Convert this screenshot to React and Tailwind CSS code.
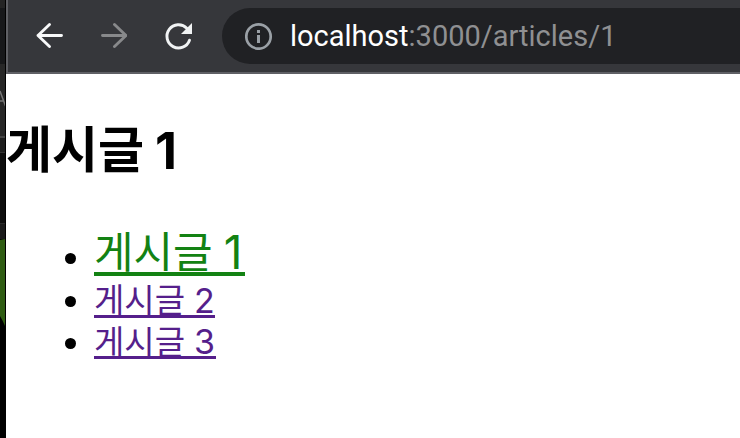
import React from "react";

function BackgroundWindow() {
  return (
    <div className="flex h-full w-[6px] shrink-0 flex-col overflow-hidden border-r border-black bg-black font-['Inter',sans-serif]">
      <div className="h-2 shrink-0 bg-[#242424]" />
      <div className="h-14 shrink-0 bg-[#17181a]" />
      <div className="h-[72px] shrink-0 overflow-hidden bg-[#272727]">
        <svg className="block h-full w-[5px]" viewBox="0 0 5 72" fill="none" stroke="#777" strokeWidth="1.5">
          <path d="M0 27 L5.5 42 M0 37H4" />
        </svg>
      </div>
      <div className="h-[2px] shrink-0 bg-[#444]" />
      <div className="h-[14px] shrink-0 bg-[#1d1d1d]" />
      <div className="h-px shrink-0 bg-[#333]" />
      <div className="h-[70px] shrink-0 bg-[#0d0d0d]" />
      <div className="h-4 shrink-0 border-t border-[#2a2a2a] bg-[#1a1a1a]" />
      <svg className="block h-[87px] w-[5px] shrink-0" viewBox="0 0 5 87">
        <path d="M0 1 L5 0 V87 Q3 82 0 77Z" fill="#2f5c12" />
      </svg>
    </div>
  );
}

function Toolbar() {
  return (
    <header className="flex h-[74px] shrink-0 items-center border-b-2 border-l-2 border-[#5f6065] bg-[#36373b]">
      <svg className="ml-[27px] h-7 w-7 shrink-0" viewBox="0 0 28 28" fill="none" stroke="#f8f9fa" strokeWidth="2.9" strokeLinecap="round" strokeLinejoin="round">
        <path d="M26.5 13.5H3M14.5 2.5L3 13.5L14.5 24.5" />
      </svg>
      <svg className="ml-9 h-7 w-7 shrink-0" viewBox="0 0 28 28" fill="none" stroke="#88898b" strokeWidth="2.9" strokeLinecap="round" strokeLinejoin="round">
        <path d="M3.5 13.5H27M15.5 2.5L27 13.5L15.5 24.5" />
      </svg>
      <svg className="ml-9 h-7 w-7 shrink-0 overflow-visible" viewBox="0 0 28 28" fill="none">
        <path d="M26.5 18.2A11.6 11.6 0 1 1 23.8 6.2" stroke="#f1f3f4" strokeWidth="2.9" strokeLinecap="round" />
        <path d="M29 1V12H18Z" fill="#f1f3f4" />
      </svg>
      <div className="ml-[31px] flex h-14 flex-1 items-center rounded-l-full bg-[#202124] pl-[23px]">
        <svg className="h-7 w-7 shrink-0" viewBox="0 0 28 28" fill="none">
          <circle cx="13.5" cy="14.5" r="12.2" stroke="#9aa0a6" strokeWidth="2.7" />
          <path d="M12 8H15V11H12ZM12 13H15V21H12Z" fill="#9aa0a6" />
        </svg>
        <div className="ml-[17px] whitespace-nowrap font-['Roboto',sans-serif] text-[29px] leading-[56px] text-[#8f9092]">
          <span className="text-white">localhost</span>:3000/articles/1
        </div>
      </div>
    </header>
  );
}

export default function App() {
  return (
    <div className="flex h-[438px] w-[740px] overflow-hidden bg-white">
      <BackgroundWindow />
      <div className="flex min-w-0 flex-1 flex-col">
        <Toolbar />
        <main className="whitespace-nowrap font-['Inter','Noto_Sans_CJK_KR',sans-serif] text-black">
          <h1 className="mt-[44px] flex h-16 text-[50px] font-bold leading-[64px]">
            <span className="shrink-0">게시글</span>
            <span className="ml-[11px] shrink-0 pt-px text-[51px]">1</span>
          </h1>
          <ul className="mt-[46px] pl-[59px]">
            <li className="flex h-12 items-center">
              <span className="mt-[13px] h-[11px] w-[11px] rounded-full bg-black" />
              <a className="ml-[18px] flex h-12 w-[151px] border-b-4 border-[#138213] text-[43px] leading-[48px] text-[#138213]">
                <span className="shrink-0 font-normal">게시글</span>
                <span className="ml-[11px] shrink-0 text-[46px] font-normal">1</span>
              </a>
            </li>
            <li className="flex h-[42px] items-center">
              <span className="mt-[9px] h-[11px] w-[11px] rounded-full bg-black" />
              <a className="ml-[18px] flex h-[42px] w-[121px] border-b-[3px] border-[#551f8b] text-[33px] leading-[49px] text-[#551f8b]">
                <span className="shrink-0 font-normal">게시글</span>
                <span className="ml-[9px] shrink-0 text-[34px] font-normal">2</span>
              </a>
            </li>
            <li className="flex h-[41px] items-center">
              <span className="mt-[9px] h-[11px] w-[11px] rounded-full bg-black" />
              <a className="ml-[18px] flex h-[41px] w-[122px] border-b-[3px] border-[#551f8b] text-[33px] leading-[48px] text-[#551f8b]">
                <span className="shrink-0 font-normal">게시글</span>
                <span className="ml-[9px] shrink-0 text-[34px] font-normal">3</span>
              </a>
            </li>
          </ul>
        </main>
      </div>
    </div>
  );
}
